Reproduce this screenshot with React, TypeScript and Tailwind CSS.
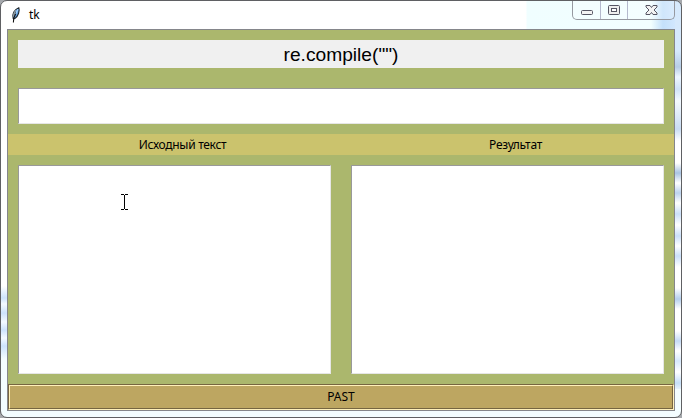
function Feather() {
  return (
    <svg width="14" height="18" viewBox="0 0 14 18" className="block">
      <path d="M3.2 12.5C1.8 8.5 4 3.5 8.8 1.7C9.9 4.5 8.5 10 4.8 12.6Z" fill="#5d9fe4" stroke="#20262c" strokeWidth="1.1" />
      <path d="M3 11.5C2.6 8 4 4.8 6.5 3L4.4 10Z" fill="#8e989d" />
      <path d="M6.3 6L3.7 12.5L3.4 16.5" fill="none" stroke="#111" strokeWidth="1.1" />
      <path d="M7.9 3.3L5.8 8" stroke="#a5d0fa" strokeWidth="1.2" />
    </svg>
  );
}

function WindowButtons() {
  return (
    <div className="flex h-[19px] w-[103px] rounded-b-[5px] border border-t-0 border-[#9699a0] bg-white/20">
      <div className="w-[28px] border-r border-[#b4b9cd]">
        <svg width="27" height="18" className="block">
          <rect x="8.5" y="9.5" width="11" height="4" rx="1" fill="#f3f3f3" stroke="#555563" />
        </svg>
      </div>
      <div className="w-[27px] border-r border-[#b4b9cd]">
        <svg width="26" height="18" className="block">
          <rect x="7.5" y="4.5" width="11" height="9" rx="1" fill="#eeeeee" stroke="#555563" />
          <rect x="10.5" y="7.5" width="5" height="3" fill="#ffffff" stroke="#555563" />
        </svg>
      </div>
      <div className="grow">
        <svg width="46" height="18" className="block">
          <path d="M18 4.5h4l1.5 2 1.5-2h4v1.5l-3 3 3 3v1.5h-4l-1.5-2-1.5 2h-4v-1.5l3-3-3-3z" fill="#f3f3f3" stroke="#555563" strokeLinejoin="round" />
        </svg>
      </div>
    </div>
  );
}

function Field({ className }: { className: string }) {
  return <div className={`border border-t-[#999999] border-l-[#999999] border-r-[#e6e6e6] border-b-[#e6e6e6] bg-white ${className}`} />;
}

function TextCursor() {
  return (
    <svg width="7" height="16" viewBox="0 0 7 16" className="absolute left-[103px] top-[29px]" shapeRendering="crispEdges">
      <path d="M0 0h3v1H0zM4 0h3v1H4zM3 1h1v14H3zM0 15h3v1H0zM4 15h3v1H4z" fill="#000" />
    </svg>
  );
}

export default function App() {
  return (
    <div className="flex h-[418px] w-[682px] flex-col overflow-hidden bg-[#a5a8ac] font-['Noto_Sans','Open_Sans',sans-serif] text-[12px] text-black">
      <div className="flex grow flex-col rounded-[7px] border border-[#5f6063] bg-[linear-gradient(180deg,#d6e9fc_0px,#d6e9fc_50px,#b7cde5_66px,#eef7ff_76px,#d0e3f8_88px,#f4faff_100px,#c9dcf2_128px,#ffffff_140px,#ffffff_162px,#a9c4e2_172px,#ffffff_182px,#bcd3ee_192px,#ffffff_202px,#cbe0fa_213px,#ffffff_224px,#cbe0fa_235px,#ffffff_245px,#cbe0fa_255px,#ffffff_266px,#ffffff_287px,#b5cfec_298px,#ffffff_308px,#ffffff_330px,#c5dbf4_340px,#ffffff_350px,#d7e9fc_360px,#ffffff_371px,#c5dff8_382px,#ffffff_392px),linear-gradient(180deg,#ffffff_285px,#cde3fc_297px,#f4faff_303px,#cde3fc_312px,#f4faff_321px,#cde3fc_329px,#f4faff_337px,#cde3fc_345px,#f4fdff_358px),linear-gradient(90deg,#ffffff_0px,#ffffff_525px,#f0feff_526px,#f2feff_650px,#c4e0fb_662px,#d8ebff_680px),linear-gradient(90deg,#f3fdff,#f3fdff)] bg-[size:6px_388px,6px_388px,100%_29px,100%_100%] bg-[position:right_top,left_top,left_top,left_top] bg-no-repeat px-[6px] pb-[6px]">
        <div className="flex h-[28px] justify-between">
          <div className="flex">
            <div className="ml-[3px] mt-[5px]"><Feather /></div>
            <div className="ml-[5px] mt-[5px] leading-[18px]">tk</div>
          </div>
          <WindowButtons />
        </div>
        <div className="flex h-[382px] w-[668px] flex-col border border-[#85868b] bg-[#abb76d]">
          <div className="mx-[10px] mt-[10px] h-[28px] bg-[#f0f0f0] text-center font-['Liberation_Sans',sans-serif] text-[19.2px] leading-[29px]">re.compile("")</div>
          <Field className="mx-[10px] mt-[20px] h-[36px]" />
          <div className="mt-[10px] flex h-[21px] bg-[#cbc36d] text-center leading-[21px] tracking-[-0.3px]">
            <div className="w-[349px]">Исходный текст</div>
            <div className="w-[317px]">Результат</div>
          </div>
          <div className="mx-[10px] mt-[10px] flex h-[209px] gap-[20px]">
            <div className="relative flex w-[313px]">
              <Field className="w-full" />
              <TextCursor />
            </div>
            <Field className="w-[313px]" />
          </div>
          <button className="mt-[10px] h-[26px] border border-b-[#fff0b9] border-l-[#766641] border-r-[#fff0b9] border-t-[#766641]">
            <div className="h-[24px] border border-b-[#766641] border-l-[#fff0b9] border-r-[#766641] border-t-[#fff0b9] bg-[#bda661] leading-[22px]">PAST</div>
          </button>
        </div>
      </div>
    </div>
  );
}
